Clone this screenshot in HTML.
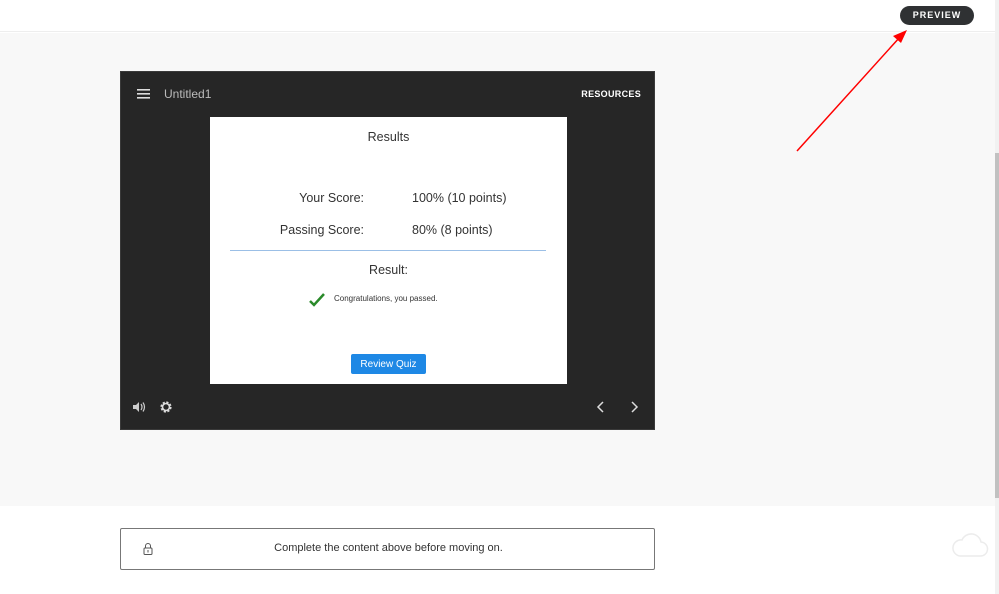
<!DOCTYPE html>
<html><head><meta charset="utf-8">
<style>
*{margin:0;padding:0;box-sizing:border-box}
html,body{width:999px;height:594px;overflow:hidden;background:#fff;font-family:"Liberation Sans",sans-serif}
.top{position:absolute;left:0;top:0;width:995px;height:32px;background:#fff;border-bottom:1px solid #eee}
.pv{position:absolute;left:900px;top:6px;width:74px;height:19px;border-radius:10px;background:#2f3133;color:#fff;font-size:9px;font-weight:bold;letter-spacing:1px;text-align:center;line-height:19px}
.band{position:absolute;left:0;top:33px;width:995px;height:473px;background:#f8f8f8}
.sb{position:absolute;left:995px;top:0;width:4px;height:594px;background:#f1f1f1}
.sbt{position:absolute;left:995px;top:153px;width:4px;height:345px;background:#c1c1c1}
.player{position:absolute;left:120px;top:71px;width:535px;height:359px;background:#262626;border:1px solid #3a3a3a}
.ttl{position:absolute;left:43px;top:15px;color:#bbb;font-size:12px}
.res{position:absolute;right:13px;top:17px;color:#fff;font-size:9px;font-weight:bold;letter-spacing:.3px}
.card{position:absolute;left:89px;top:45px;width:357px;height:267px;background:#fff;color:#333}
.t{position:absolute;font-size:12.5px;white-space:nowrap}
.btn{position:absolute;left:141px;top:237px;width:75px;height:20px;background:#1e88e5;border-radius:2px;color:#fff;font-size:10px;text-align:center;line-height:21px}
.lock{position:absolute;left:120px;top:528px;width:535px;height:42px;border:1px solid #777;border-radius:2px;background:#fff}
</style></head><body>
<div class="top"><div class="pv">PREVIEW</div></div>
<div class="band"></div>
<div class="sb"></div><div class="sbt"></div>
<svg style="position:absolute;left:0;top:0" width="999" height="594"><line x1="797" y1="151" x2="900" y2="37" stroke="#f00" stroke-width="1.5"/><polygon points="907,30 893,36 901,43" fill="#f00"/></svg>
<div class="player">
 <svg style="position:absolute;left:16px;top:17px" width="14" height="10"><rect y="0" width="13" height="1.6" fill="#ddd"/><rect y="4" width="13" height="1.6" fill="#ddd"/><rect y="8" width="13" height="1.6" fill="#ddd"/></svg>
 <div class="ttl">Untitled1</div>
 <div class="res">RESOURCES</div>
 <div class="card">
  <div class="t" style="left:0;width:357px;text-align:center;top:13px">Results</div>
  <div class="t" style="right:203px;top:74px">Your Score:</div>
  <div class="t" style="left:202px;top:74px">100% (10 points)</div>
  <div class="t" style="right:203px;top:106px">Passing Score:</div>
  <div class="t" style="left:202px;top:106px">80% (8 points)</div>
  <div style="position:absolute;left:20px;top:133px;width:316px;height:1px;background:#9bbfe6"></div>
  <div class="t" style="left:0;width:357px;text-align:center;top:146px">Result:</div>
  <svg style="position:absolute;left:98px;top:175px" width="18" height="16"><path d="M2 9 L6 13 L16 2" stroke="#2a8a2a" stroke-width="2.5" fill="none"/></svg>
  <div class="t" style="left:124px;top:177px;font-size:8px">Congratulations, you passed.</div>
  <div class="btn">Review Quiz</div>
 </div>
 <svg style="position:absolute;left:11px;top:329px" width="14" height="12"><path d="M1 4h3l3-3v10l-3-3H1z" fill="#ccc"/><path d="M9 3q2 3 0 6M11 1.5q3 4.5 0 9" stroke="#ccc" fill="none" stroke-width="1.2"/></svg>
 <svg style="position:absolute;left:38px;top:328px" width="14" height="14" viewBox="0 0 14 14"><circle cx="7" cy="7" r="4.3" fill="none" stroke="#ddd" stroke-width="2.6" stroke-dasharray="2 1.4"/><circle cx="7" cy="7" r="3.5" fill="none" stroke="#ddd" stroke-width="1.6"/></svg>
 <svg style="position:absolute;left:475px;top:329px" width="10" height="12"><path d="M7 1 L2 6 L7 11" stroke="#ddd" stroke-width="1.5" fill="none"/></svg>
 <svg style="position:absolute;left:508px;top:329px" width="10" height="12"><path d="M3 1 L8 6 L3 11" stroke="#ddd" stroke-width="1.5" fill="none"/></svg>
</div>
<div class="lock">
 <svg style="position:absolute;left:22px;top:13px" width="10" height="14"><path d="M2.5 6V4a2.5 2.5 0 0 1 5 0v2" stroke="#555" fill="none"/><rect x="1" y="6" width="8" height="6.5" rx="1" stroke="#555" fill="none"/><rect x="4.5" y="8" width="1" height="2.5" fill="#555"/></svg>
 <div style="position:absolute;left:0;width:535px;text-align:center;top:13px;font-size:11px;color:#333">Complete the content above before moving on.</div>
</div>
<svg style="position:absolute;left:950px;top:528px" width="40" height="32"><path d="M10 28h20a7 7 0 0 0 1-14 10 10 0 0 0-19-2 8 8 0 0 0-2 16z" fill="#fff" stroke="#ececec" stroke-width="1.5"/></svg>
</body></html>
